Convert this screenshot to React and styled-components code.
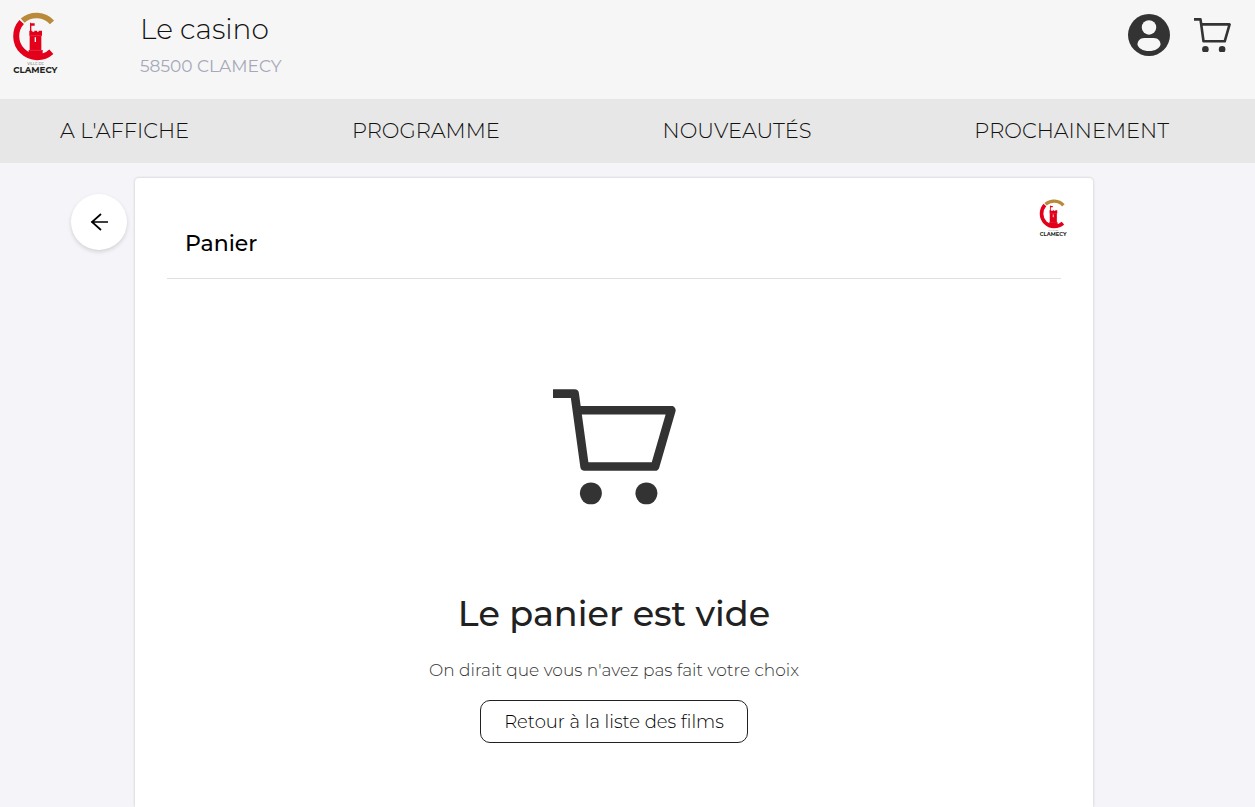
import React from "react";
import styled, { createGlobalStyle } from "styled-components";

const GlobalStyle = createGlobalStyle`
  * {
    box-sizing: border-box;
  }

  body {
    margin: 0;
    background: #f4f4f9;
    color: #212121;
    font-family: Montserrat, Inter, "Liberation Sans", sans-serif;
  }

  h1, h2, p {
    margin: 0;
  }

  a {
    color: inherit;
    text-decoration: none;
  }
`;

const Page = styled.div`
  min-height: 100vh;
  display: flex;
  flex-direction: column;
`;

const Header = styled.header`
  display: flex;
  align-items: flex-start;
  height: 99px;
  padding: 12px 24px 0 12px;
  background: #f6f6f6;
`;

const HomeLink = styled.a`
  width: 128px;
`;

const CinemaName = styled.h1`
  font-size: 28px;
  font-weight: 300;
  line-height: 34px;
  color: #111;
`;

const CinemaCity = styled.p`
  margin-top: 10px;
  font-size: 17px;
  line-height: 20px;
  color: #a5a8b8;
`;

const HeaderActions = styled.div`
  display: flex;
  gap: 24px;
  margin-left: auto;
`;

const IconButton = styled.button`
  display: flex;
  align-items: center;
  height: 46px;
  padding: 0;
  border: none;
  background: none;
  cursor: pointer;
`;

const Nav = styled.nav`
  display: flex;
  justify-content: space-between;
  align-items: center;
  height: 64px;
  padding: 0 86px 0 60px;
  background: #e7e7e7;
`;

const NavLink = styled.a`
  font-size: 21px;
  font-weight: 300;
  line-height: 28px;
  color: #111;
`;

const Main = styled.main`
  flex: 1;
  display: grid;
  grid-template-columns: 127px minmax(0, 1fr);
  column-gap: 8px;
  padding: 15px 162px 0 0;
`;

const BackButton = styled.button`
  justify-self: end;
  display: flex;
  align-items: center;
  justify-content: center;
  width: 56px;
  height: 56px;
  margin-top: 16px;
  padding: 0;
  border: none;
  border-radius: 50%;
  background: #fff;
  box-shadow: 0 2px 4px rgba(0, 0, 0, 0.14);
  cursor: pointer;
`;

const Card = styled.section`
  padding: 0 32px;
  border-radius: 4px 4px 0 0;
  background: #fff;
  box-shadow: 0 0 3px rgba(0, 0, 0, 0.2);
`;

const CardHeader = styled.div`
  display: flex;
  justify-content: space-between;
  align-items: flex-start;
  height: 101px;
  padding-left: 18px;
  border-bottom: 1px solid #e0e0e0;
`;

const CardTitle = styled.h2`
  margin-top: 52px;
  font-size: 22px;
  font-weight: 500;
  line-height: 28px;
  color: #000;
`;

const CardLogo = styled.div`
  margin: 21px -6px 0 0;
`;

const EmptyCart = styled.div`
  display: flex;
  flex-direction: column;
  align-items: center;
  padding-top: 110px;
  padding-bottom: 40px;
  text-align: center;
`;

const EmptyTitle = styled.h2`
  margin-top: 87px;
  font-size: 35px;
  font-weight: 500;
  line-height: 44px;
`;

const EmptyText = styled.p`
  margin-top: 22px;
  font-size: 17px;
  font-weight: 300;
  line-height: 24px;
  color: #333;
`;

const ReturnButton = styled.button`
  height: 43px;
  margin-top: 18px;
  padding: 2px 23px 0;
  border: 1px solid #212121;
  border-radius: 10px;
  background: #fff;
  color: #000;
  font-family: inherit;
  font-size: 18px;
  font-weight: 300;
  cursor: pointer;
`;

const Svg = styled.svg`
  display: block;
`;

function Logo({ width }) {
  return (
    <Svg
      width={width}
      viewBox="38 36 138 188"
      role="img"
      aria-label="Ville de Clamecy"
    >
      <path
        d="M70 62 A63 63 0 0 1 158 67"
        fill="none"
        stroke="#b98a3a"
        strokeWidth="17"
      />
      <path
        d="M67 66 A63 63 0 0 0 156 155"
        fill="none"
        stroke="#e2001a"
        strokeWidth="18"
      />
      <path
        d="M90 92 H99 V95 H105 V92 H113 V95 H118 V92 H128 V107 H126 V150 H130 V174 H88 V150 H91 V107 H90 Z M92 68 H95 V70 H106 V77 H96 V92 H92 Z"
        fill="#e2001a"
      />
      <path d="M106 112 H110 V126 H106 Z" fill="#fff" />
      <path d="M93 107 H125 M91 151 H127" stroke="#f07a86" strokeWidth="1" />
      <text
        x="109"
        y="195"
        textAnchor="middle"
        fontSize="11"
        fill="#555"
      >
        VILLE DE
      </text>
      <text
        x="108"
        y="219"
        textAnchor="middle"
        fontSize="26"
        fontWeight="700"
        fill="#231f20"
      >
        CLAMECY
      </text>
    </Svg>
  );
}

function CartIcon({ width }) {
  return (
    <Svg width={width} viewBox="39 56 370 348" aria-hidden="true">
      <path
        d="M39 70 H104 L134 289 H346 L395 120 H112"
        fill="none"
        stroke="#333"
        strokeWidth="26"
        strokeLinejoin="round"
      />
      <circle cx="153" cy="370" r="33" fill="#333" />
      <circle cx="320" cy="370" r="33" fill="#333" />
    </Svg>
  );
}

function UserIcon() {
  return (
    <Svg width="42" height="42" viewBox="0 0 128 128" aria-hidden="true">
      <circle cx="64" cy="64" r="64" fill="#333" />
      <circle cx="64" cy="41" r="22" fill="#f6f6f6" />
      <path
        d="M49 73 H79 C91 73 99 82 99 92 C99 103 82 113 64 113 C46 113 29 103 29 92 C29 82 37 73 49 73 Z"
        fill="#f6f6f6"
      />
    </Svg>
  );
}

function BackIcon() {
  return (
    <Svg width="20" height="20" viewBox="0 0 20 20" aria-hidden="true">
      <path
        d="M12 2 L3 10 L12 18 M2 10 H19"
        fill="none"
        stroke="#000"
        strokeWidth="1.7"
      />
    </Svg>
  );
}

const links = ["A L'AFFICHE", "PROGRAMME", "NOUVEAUTÉS", "PROCHAINEMENT"];

function App() {
  return (
    <Page>
      <GlobalStyle />
      <Header>
        <HomeLink href="#">
          <Logo width="46" />
        </HomeLink>
        <div>
          <CinemaName>Le casino</CinemaName>
          <CinemaCity>58500 CLAMECY</CinemaCity>
        </div>
        <HeaderActions>
          <IconButton aria-label="Mon compte">
            <UserIcon />
          </IconButton>
          <IconButton aria-label="Panier">
            <CartIcon width="37" />
          </IconButton>
        </HeaderActions>
      </Header>

      <Nav>
        {links.map((label) => (
          <NavLink key={label} href="#">
            {label}
          </NavLink>
        ))}
      </Nav>

      <Main>
        <BackButton aria-label="Retour">
          <BackIcon />
        </BackButton>
        <Card>
          <CardHeader>
            <CardTitle>Panier</CardTitle>
            <CardLogo>
              <Logo width="28" />
            </CardLogo>
          </CardHeader>
          <EmptyCart>
            <CartIcon width="123" />
            <EmptyTitle>Le panier est vide</EmptyTitle>
            <EmptyText>On dirait que vous n'avez pas fait votre choix</EmptyText>
            <ReturnButton>Retour à la liste des films</ReturnButton>
          </EmptyCart>
        </Card>
      </Main>
    </Page>
  );
}

export default App;
